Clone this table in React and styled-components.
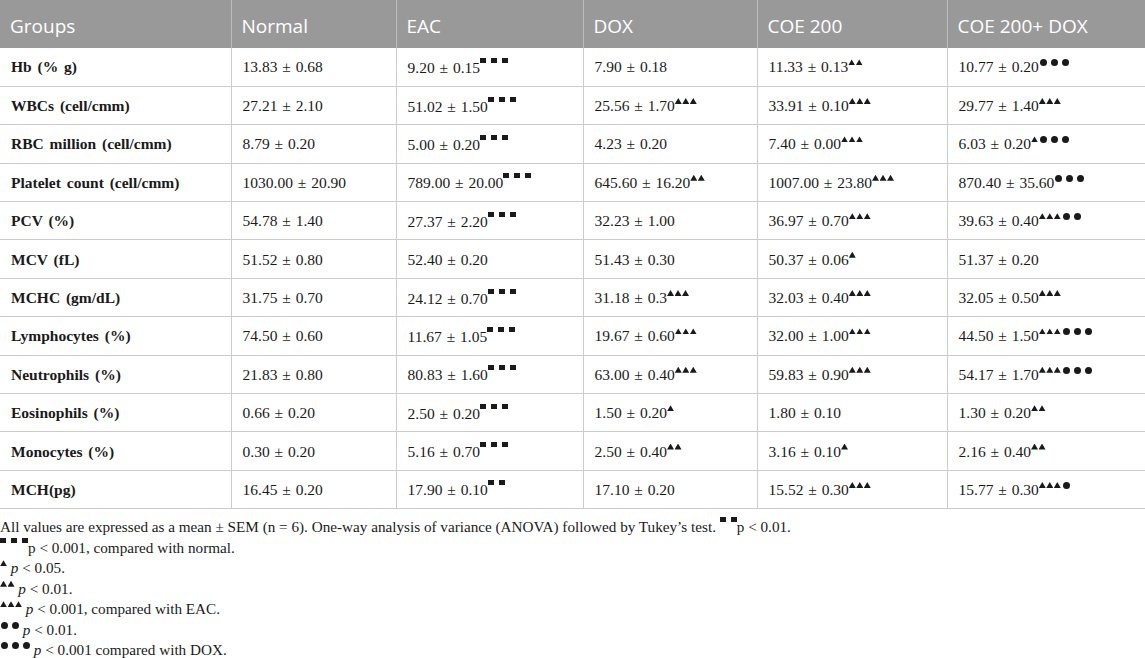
import React from 'react';
import styled, { createGlobalStyle, css } from 'styled-components';

const GlobalStyle = createGlobalStyle`
	body {
		margin: 0;
		background: #ffffff;
		font-family: 'Liberation Serif', 'Times New Roman', serif;
		color: #1a1a1a;
	}
`;

const Page = styled.div`
	width: 1145px;
`;

const Table = styled.table`
	width: 1145px;
	table-layout: fixed;
	border-collapse: collapse;
`;

const HeadCell = styled.th`
	height: 48px;
	padding: 3px 10px 0;
	box-sizing: border-box;
	background: #999999;
	color: #ffffff;
	font-family: 'Open Sans', 'Noto Sans', sans-serif;
	font-size: 19px;
	font-weight: 400;
	text-align: left;
	border-left: 1px solid #bdbdbd;
	&:first-child {
		border-left: none;
	}
`;

const Cell = styled.td`
	height: 38.4px;
	padding: 1px 8px 0 11px;
	box-sizing: border-box;
	font-size: 15.5px;
	font-weight: ${(p) => (p.$label ? 700 : 400)};
	word-spacing: ${(p) => (p.$label ? '2px' : '1px')};
	white-space: nowrap;
	border-bottom: 1px solid #cccccc;
	border-left: 1px solid #cccccc;
	${(p) =>
		p.$label &&
		css`
			border-left: none;
		`}
`;

const shapes = {
	s: css`
		width: 6px;
		height: 5px;
		margin-left: ${(p) => (p.$first ? 0 : 5)}px;
		vertical-align: 10px;
	`,
	t: css`
		width: 7px;
		height: 6px;
		margin-left: ${(p) => (p.$first ? 0 : 0.5)}px;
		vertical-align: 7px;
		clip-path: polygon(50% 0, 100% 100%, 0 100%);
	`,
	c: css`
		width: 7px;
		height: 7px;
		margin-left: ${(p) => (p.$first ? 1 : p.$prev === 't' ? 2 : 4)}px;
		vertical-align: 6px;
		border-radius: 50%;
	`,
};

const Mark = styled.span`
	display: inline-block;
	background: #1a1a1a;
	${(p) => shapes[p.$kind]}
`;

const Marks = styled.span`
	word-spacing: 0;
`;

const Notes = styled.div`
	padding-top: 8px;
	font-size: 15.2px;
	line-height: 20.5px;
`;

const Note = styled.div`
	white-space: nowrap;
`;

const P = styled.i`
	font-style: ${(p) => (p.$plain ? 'normal' : 'italic')};
`;

// "sss" = squares, "ttt" = triangles, "ccc" = circles
const Sym = ({ code }) => {
	if (!code) return null;
	const list = code.split('');
	return (
		<Marks>
			{list.map((k, i) => (
				<Mark key={i} $kind={k} $first={i === 0} $prev={list[i - 1]} />
			))}
		</Marks>
	);
};

const heads = ['Groups', 'Normal', 'EAC', 'DOX', 'COE 200', 'COE 200+ DOX'];
const widths = [231, 165, 187, 174, 190, 198];

const rows = [
	['Hb (% g)', ['13.83 ± 0.68'], ['9.20 ± 0.15', 'sss'], ['7.90 ± 0.18'], ['11.33 ± 0.13', 'tt'], ['10.77 ± 0.20', 'ccc']],
	['WBCs (cell/cmm)', ['27.21 ± 2.10'], ['51.02 ± 1.50', 'sss'], ['25.56 ± 1.70', 'ttt'], ['33.91 ± 0.10', 'ttt'], ['29.77 ± 1.40', 'ttt']],
	['RBC million (cell/cmm)', ['8.79 ± 0.20'], ['5.00 ± 0.20', 'sss'], ['4.23 ± 0.20'], ['7.40 ± 0.00', 'ttt'], ['6.03 ± 0.20', 'tccc']],
	['Platelet count (cell/cmm)', ['1030.00 ± 20.90'], ['789.00 ± 20.00', 'sss'], ['645.60 ± 16.20', 'tt'], ['1007.00 ± 23.80', 'ttt'], ['870.40 ± 35.60', 'ccc']],
	['PCV (%)', ['54.78 ± 1.40'], ['27.37 ± 2.20', 'sss'], ['32.23 ± 1.00'], ['36.97 ± 0.70', 'ttt'], ['39.63 ± 0.40', 'tttcc']],
	['MCV (fL)', ['51.52 ± 0.80'], ['52.40 ± 0.20'], ['51.43 ± 0.30'], ['50.37 ± 0.06', 't'], ['51.37 ± 0.20']],
	['MCHC (gm/dL)', ['31.75 ± 0.70'], ['24.12 ± 0.70', 'sss'], ['31.18 ± 0.3', 'ttt'], ['32.03 ± 0.40', 'ttt'], ['32.05 ± 0.50', 'ttt']],
	['Lymphocytes (%)', ['74.50 ± 0.60'], ['11.67 ± 1.05', 'sss'], ['19.67 ± 0.60', 'ttt'], ['32.00 ± 1.00', 'ttt'], ['44.50 ± 1.50', 'tttccc']],
	['Neutrophils (%)', ['21.83 ± 0.80'], ['80.83 ± 1.60', 'sss'], ['63.00 ± 0.40', 'ttt'], ['59.83 ± 0.90', 'ttt'], ['54.17 ± 1.70', 'tttccc']],
	['Eosinophils (%)', ['0.66 ± 0.20'], ['2.50 ± 0.20', 'sss'], ['1.50 ± 0.20', 't'], ['1.80 ± 0.10'], ['1.30 ± 0.20', 'tt']],
	['Monocytes (%)', ['0.30 ± 0.20'], ['5.16 ± 0.70', 'sss'], ['2.50 ± 0.40', 'tt'], ['3.16 ± 0.10', 't'], ['2.16 ± 0.40', 'tt']],
	['MCH(pg)', ['16.45 ± 0.20'], ['17.90 ± 0.10', 'ss'], ['17.10 ± 0.20'], ['15.52 ± 0.30', 'ttt'], ['15.77 ± 0.30', 'tttc']],
];

const App = () => {
	return (
		<>
			<GlobalStyle />
			<Page>
				<Table>
					<colgroup>
						{widths.map((w, i) => (
							<col key={i} style={{ width: w }} />
						))}
					</colgroup>
					<thead>
						<tr>
							{heads.map((h) => (
								<HeadCell key={h}>{h}</HeadCell>
							))}
						</tr>
					</thead>
					<tbody>
						{rows.map(([label, ...cells]) => (
							<tr key={label}>
								<Cell $label>{label}</Cell>
								{cells.map(([text, code], i) => (
									<Cell key={i}>
										{text}
										<Sym code={code} />
									</Cell>
								))}
							</tr>
						))}
					</tbody>
				</Table>
				<Notes>
					<Note>
						All values are expressed as a mean ± SEM (n = 6). One-way analysis of variance (ANOVA) followed by Tukey’s test.{' '}
						<Sym code="ss" />
						<P $plain>p</P> &lt; 0.01.
					</Note>
					<Note>
						<Sym code="sss" />
						<P $plain>p</P> &lt; 0.001, compared with normal.
					</Note>
					<Note>
						<Sym code="t" /> <P>p</P> &lt; 0.05.
					</Note>
					<Note>
						<Sym code="tt" /> <P>p</P> &lt; 0.01.
					</Note>
					<Note>
						<Sym code="ttt" /> <P>p</P> &lt; 0.001, compared with EAC.
					</Note>
					<Note>
						<Sym code="cc" /> <P>p</P> &lt; 0.01.
					</Note>
					<Note>
						<Sym code="ccc" /> <P>p</P> &lt; 0.001 compared with DOX.
					</Note>
				</Notes>
			</Page>
		</>
	);
};

export default App;
